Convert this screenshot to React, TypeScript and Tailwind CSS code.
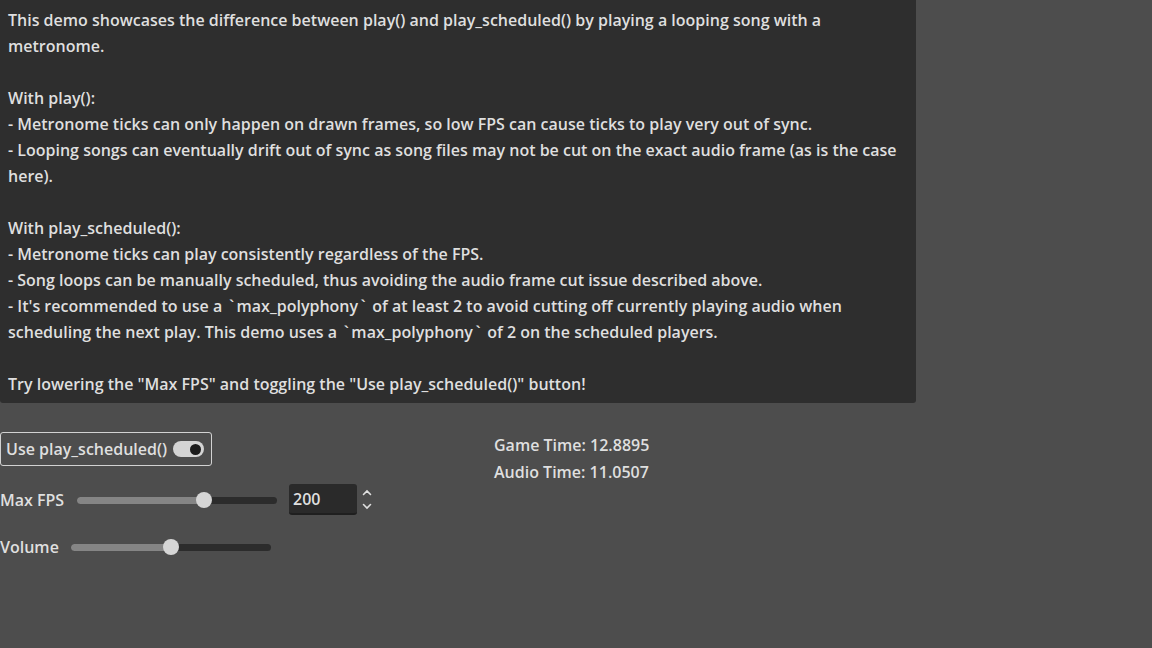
import React from "react";

const font = { fontFamily: '"Open Sans", "Noto Sans", sans-serif' };

function Slider({ width, fill }: { width: number; fill: number }) {
  return (
    <div className="relative h-[16px]" style={{ width }}>
      <div className="absolute left-0 right-0 top-[5px] h-[7px] rounded-full bg-[#2c2c2c]" />
      <div className="absolute left-0 top-[5px] h-[7px] rounded-full bg-[#858585]" style={{ width: fill }} />
      <div
        className="absolute top-0 h-[16px] w-[16px] rounded-full bg-[#d6d6d6]"
        style={{ left: fill - 8 }}
      />
    </div>
  );
}

function Line({ text }: { text: string }) {
  const parts = text.split("`");
  return (
    <div className="h-[26px] whitespace-pre">
      {parts.map((p, i) => (
        <React.Fragment key={i}>
          {i > 0 && <span className="mx-[2.5px]">`</span>}
          {p}
        </React.Fragment>
      ))}
    </div>
  );
}

export default function App() {
  const lines = [
    "This demo showcases the difference between play() and play_scheduled() by playing a looping song with a",
    "metronome.",
    "",
    "With play():",
    "- Metronome ticks can only happen on drawn frames, so low FPS can cause ticks to play very out of sync.",
    "- Looping songs can eventually drift out of sync as song files may not be cut on the exact audio frame (as is the case",
    "here).",
    "",
    "With play_scheduled():",
    "- Metronome ticks can play consistently regardless of the FPS.",
    "- Song loops can be manually scheduled, thus avoiding the audio frame cut issue described above.",
    "- It's recommended to use a `max_polyphony` of at least 2 to avoid cutting off currently playing audio when",
    "scheduling the next play. This demo uses a `max_polyphony` of 2 on the scheduled players.",
    "",
    'Try lowering the "Max FPS" and toggling the "Use play_scheduled()" button!',
  ];
  return (
    <div className="w-[1152px] h-[648px] bg-[#4d4d4d] text-[#dfdfdf] text-[16px] font-semibold overflow-hidden" style={font}>
      <div className="w-[916px] h-[403px] bg-[#2e2e2e] rounded-b-[3px] px-[8px] pt-[7px] leading-[26px]">
        {lines.map((l, i) => (
          <Line key={i} text={l} />
        ))}
      </div>
      <div className="flex mt-[29px]">
        <div className="w-[494px] flex flex-col">
          <div className="w-[212px] h-[34px] border border-[#d2d2d2] rounded-[3px] flex items-center pl-[5px] gap-[6px]">
            <span className="leading-[20px]">Use play_scheduled()</span>
            <div className="relative w-[31px] h-[16px] rounded-full bg-[#d4d4d4]">
              <div className="absolute right-[3px] top-[2.5px] w-[11px] h-[11px] rounded-full bg-[#1c1c1c]" />
            </div>
          </div>
          <div className="flex items-center mt-[18px] h-[32px]">
            <span className="w-[77px]">Max FPS</span>
            <Slider width={200} fill={127} />
            <div className="ml-[12px] w-[68px] h-[31px] -mt-[1px] bg-[#2a2a2a] rounded-[3px] border-b-2 border-[#1f1f1f] flex items-center pl-[4px] pt-[1px]">
              200
            </div>
            <div className="ml-[4px] flex flex-col items-center gap-[7px] w-[12px] -mt-[1px]">
              <svg width="10" height="7" viewBox="0 0 10 7"><path d="M1.5 5.5 L5 2 L8.5 5.5" stroke="#dfdfdf" strokeWidth="1.6" fill="none" strokeLinecap="round" /></svg>
              <svg width="10" height="7" viewBox="0 0 10 7"><path d="M1.5 1.5 L5 5 L8.5 1.5" stroke="#dfdfdf" strokeWidth="1.6" fill="none" strokeLinecap="round" /></svg>
            </div>
          </div>
          <div className="flex items-center mt-[15px] h-[32px]">
            <span className="w-[71px]">Volume</span>
            <Slider width={200} fill={100} />
          </div>
        </div>
        <div className="flex flex-col leading-[27px]">
          <div>Game Time: 12.8895</div>
          <div>Audio Time: 11.0507</div>
        </div>
      </div>
    </div>
  );
}
